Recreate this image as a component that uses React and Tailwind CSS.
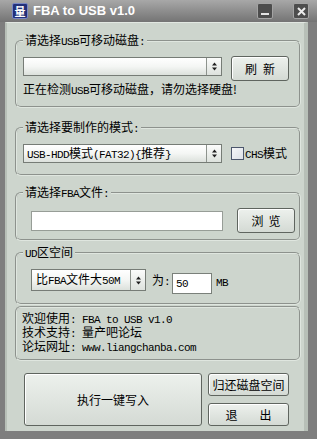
import React from 'react';

// latin text in the bitmap-ish half width look
const L = ({ children }) => (
  <span className="font-['Liberation_Mono',monospace] text-[11px] tracking-[-0.6px] whitespace-pre">{children}</span>
);

const Spinner = () => (
  <div className="flex w-[15px] shrink-0 items-center justify-center border-l border-[#8d938d] bg-gradient-to-b from-[#fbfcfb] to-[#dde2dd]">
    <svg width="5" height="9" viewBox="0 0 5 9">
      <path d="M0 3.5 L2.5 0.5 L5 3.5 Z M0 5.5 L2.5 8.5 L5 5.5 Z" fill="#1f1f1f" />
    </svg>
  </div>
);

const Combo = ({ className, children }) => (
  <div className={`flex border border-[#767c76] bg-white ${className}`}>
    <div className="flex flex-1 items-center overflow-hidden whitespace-nowrap bg-gradient-to-b from-[#ffffff] via-[#f4f6f4] to-[#dce1dc] pl-[3px] leading-none">
      {children}
    </div>
    <Spinner />
  </div>
);

const Btn = ({ className, children }) => (
  <button className={`flex items-center justify-center rounded-[3px] border border-[#5f655f] bg-gradient-to-b from-[#edf1ed] to-[#d4dad4] shadow-[inset_1px_1px_0_#ffffff] leading-none ${className}`}>
    {children}
  </button>
);

const Group = ({ label, className, children }) => (
  <fieldset className={`ml-[8px] w-[286px] rounded-[6px] border-2 [border-style:groove] border-[#dfe6df] pl-[6px] ${className}`}>
    {label && <legend className="px-[2px] leading-[14px]">{label}</legend>}
    {children}
  </fieldset>
);

export default function App() {
  return (
    <div className="flex h-[439px] w-[317px] flex-col overflow-hidden bg-[#7e7e7e] font-['Noto_Sans_CJK_SC',sans-serif] text-[12px] leading-[14px] text-black">
      {/* title bar */}
      <div className="flex h-[22px] shrink-0 items-center bg-gradient-to-b from-[#a8a8a8] to-[#747474] pl-[12px] pr-[8px]">
        <div className="flex h-[16px] w-[16px] items-center justify-center rounded-[2px] border border-[#7886c4] bg-[#22307a] text-[11px] font-bold leading-none text-white">
          量
        </div>
        <span className="ml-[5px] font-['Liberation_Sans',sans-serif] text-[13px] font-bold text-white">FBA to USB v1.0</span>
        <div className="ml-auto flex h-[16px] w-[16px] items-end justify-center rounded-[2px] border border-[#a4a4a4] bg-[#4d4d4d] pb-[3px]">
          <div className="h-[2px] w-[8px] bg-[#e4e4e4]" />
        </div>
        <div className="ml-[20px] flex h-[16px] w-[16px] items-center justify-center rounded-[2px] border border-[#a4a4a4] bg-[#4d4d4d]">
          <svg width="9" height="9" viewBox="0 0 9 9">
            <path d="M1 1 L8 8 M8 1 L1 8" stroke="#ececec" strokeWidth="2" />
          </svg>
        </div>
      </div>

      {/* body */}
      <div className="ml-[5px] flex h-[409px] w-[303px] flex-col border-l-2 border-r-4 border-t border-[#b7bfb7] border-t-[#e2e8e2] bg-[#cdd5cd]">
        <Group label={<>请选择<L>USB</L>可移动磁盘<L>:</L></>} className="mt-[10px] h-[75px] pt-[7px]">
          <div className="flex items-start">
            <Combo className="mt-[1px] h-[19px] w-[199px]" />
            <Btn className="ml-[9px] h-[25px] w-[58px] gap-[6px]">
              <span>刷</span>
              <span>新</span>
            </Btn>
          </div>
          <div className="mt-[1px]">正在检测<L>USB</L>可移动磁盘，请勿选择硬盘!</div>
        </Group>

        <Group label={<>请选择要制作的模式<L>:</L></>} className="mt-[12px] h-[56px] pt-[8px]">
          <div className="flex items-center">
            <Combo className="h-[19px] w-[199px]">
              <span><L>USB-HDD</L>模式<L>{'(FAT32){'}</L>推荐<L>{'}'}</L></span>
            </Combo>
            <div className="ml-[9px] h-[13px] w-[13px] border border-[#4c566c] bg-gradient-to-br from-[#f6f7f9] to-[#dde1e7]" />
            <span className="ml-[1px]"><L>CHS</L>模式</span>
          </div>
        </Group>

        <Group label={<>请选择<L>FBA</L>文件<L>:</L></>} className="mt-[9px] h-[56px] pt-[7px]">
          <div className="flex items-start">
            <div className="ml-[8px] mt-[3px] h-[20px] w-[192px] border border-[#979d97] bg-white" />
            <Btn className="ml-[14px] h-[25px] w-[58px] gap-[5px]">
              <span>浏</span>
              <span>览</span>
            </Btn>
          </div>
        </Group>

        <Group label={<><L>UD</L>区空间</>} className="mt-[4px] h-[60px] pt-[8px]">
          <div className="flex items-start">
            <Combo className="ml-[8px] h-[22px] w-[115px]">
              <span className="pl-[1px]">比<L>FBA</L>文件大<L>50M</L></span>
            </Combo>
            <span className="ml-[6px] mt-[4px]">为<L>:</L></span>
            <div className="ml-[2px] mt-[4px] flex h-[21px] w-[40px] items-center border border-[#7a807a] bg-white pl-[3px]">
              <L>50</L>
            </div>
            <span className="ml-[4px] mt-[5px]"><L>MB</L></span>
          </div>
        </Group>

        <div className="ml-[8px] mt-[1px] h-[55px] w-[286px] rounded-[6px] border-2 [border-style:groove] border-[#dfe6df] pl-[5px] pt-[4px] leading-[12px]">
          <div>欢迎使用<L>: FBA to USB v1.0</L></div>
          <div>技术支持<L>: </L>量产吧论坛</div>
          <div>论坛网址<L>: www.liangchanba.com</L></div>
        </div>

        <div className="ml-[17px] mt-[12px] flex">
          <Btn className="h-[53px] w-[178px]">执行一键写入</Btn>
          <div className="ml-[6px] flex w-[81px] flex-col">
            <Btn className="h-[23px] w-[81px]">归还磁盘空间</Btn>
            <Btn className="mt-[7px] h-[23px] w-[81px] gap-[22px]">
              <span>退</span>
              <span>出</span>
            </Btn>
          </div>
        </div>
      </div>
    </div>
  );
}
